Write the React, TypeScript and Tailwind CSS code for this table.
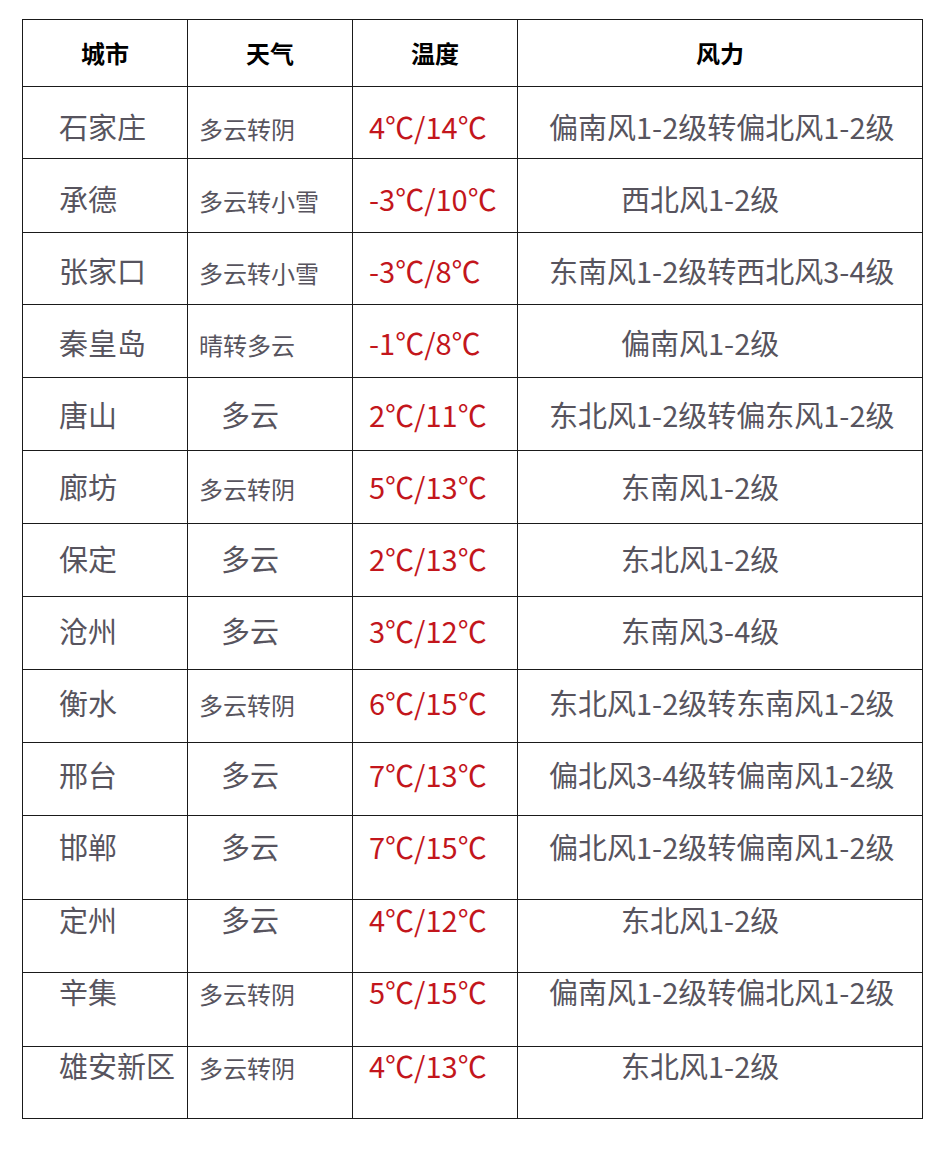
const rows = [
  { city: '石家庄', weather: '多云转阴', temp: '4℃/14℃', wind: '偏南风1-2级转偏北风1-2级', h: 'h-[72px]', pt: 'pt-[25px]' },
  { city: '承德', weather: '多云转小雪', temp: '-3℃/10℃', wind: '西北风1-2级', h: 'h-[74px]', pt: 'pt-[25px]' },
  { city: '张家口', weather: '多云转小雪', temp: '-3℃/8℃', wind: '东南风1-2级转西北风3-4级', h: 'h-[72px]', pt: 'pt-[23px]' },
  { city: '秦皇岛', weather: '晴转多云', temp: '-1℃/8℃', wind: '偏南风1-2级', h: 'h-[73px]', pt: 'pt-[23px]' },
  { city: '唐山', weather: '多云', temp: '2℃/11℃', wind: '东北风1-2级转偏东风1-2级', h: 'h-[73px]', pt: 'pt-[22px]' },
  { city: '廊坊', weather: '多云转阴', temp: '5℃/13℃', wind: '东南风1-2级', h: 'h-[73px]', pt: 'pt-[21px]' },
  { city: '保定', weather: '多云', temp: '2℃/13℃', wind: '东北风1-2级', h: 'h-[73px]', pt: 'pt-[20px]' },
  { city: '沧州', weather: '多云', temp: '3℃/12℃', wind: '东南风3-4级', h: 'h-[73px]', pt: 'pt-[19px]' },
  { city: '衡水', weather: '多云转阴', temp: '6℃/15℃', wind: '东北风1-2级转东南风1-2级', h: 'h-[73px]', pt: 'pt-[18px]' },
  { city: '邢台', weather: '多云', temp: '7℃/13℃', wind: '偏北风3-4级转偏南风1-2级', h: 'h-[73px]', pt: 'pt-[17px]' },
  { city: '邯郸', weather: '多云', temp: '7℃/15℃', wind: '偏北风1-2级转偏南风1-2级', h: 'h-[84px]', pt: 'pt-[16px]' },
  { city: '定州', weather: '多云', temp: '4℃/12℃', wind: '东北风1-2级', h: 'h-[73px]', pt: 'pt-[5px]' },
  { city: '辛集', weather: '多云转阴', temp: '5℃/15℃', wind: '偏南风1-2级转偏北风1-2级', h: 'h-[74px]', pt: 'pt-[4px]' },
  { city: '雄安新区', weather: '多云转阴', temp: '4℃/13℃', wind: '东北风1-2级', h: 'h-[72px]', pt: 'pt-[4px]' },
];

const cell = 'border border-[#1a1a1a] p-0 align-baseline leading-none';

export default function App() {
  return (
    <div className="min-h-[1150px] w-[942px] bg-white pt-[19px] pl-[22px] font-['Noto_Sans_CJK_SC',sans-serif]">
      <table className="w-[901px] table-fixed border-collapse">
        <colgroup>
          <col className="w-[165px]" />
          <col className="w-[165px]" />
          <col className="w-[165px]" />
          <col />
        </colgroup>
        <thead>
          <tr className="h-[67px]">
            {['城市', '天气', '温度', '风力'].map((t) => (
              <th key={t} className="border border-[#1a1a1a] p-0 text-center align-middle text-[24px] font-bold text-black">
                {t}
              </th>
            ))}
          </tr>
        </thead>
        <tbody>
          {rows.map((r) => {
            const shortWeather = r.weather.length === 2;
            const shortWind = r.wind.length <= 7;
            return (
              <tr key={r.city} className={r.h}>
                <td className={`${cell} ${r.pt} pl-[36px] text-[29px] text-[#57545e] whitespace-nowrap`}>{r.city}</td>
                <td
                  className={`${cell} ${r.pt} text-[#57545e] whitespace-nowrap ${
                    shortWeather ? 'pl-[33px] text-[29px]' : 'pl-[11px] text-[24px]'
                  }`}
                >
                  {r.weather}
                </td>
                <td className={`${cell} ${r.pt} pl-[16px] text-[29px] text-[#c3161c] whitespace-nowrap`}>{r.temp}</td>
                <td
                  className={`${cell} ${r.pt} text-[29px] text-[#57545e] whitespace-nowrap ${
                    shortWind ? 'pl-[103px]' : 'pl-[31px]'
                  }`}
                >
                  {r.wind}
                </td>
              </tr>
            );
          })}
        </tbody>
      </table>
    </div>
  );
}
